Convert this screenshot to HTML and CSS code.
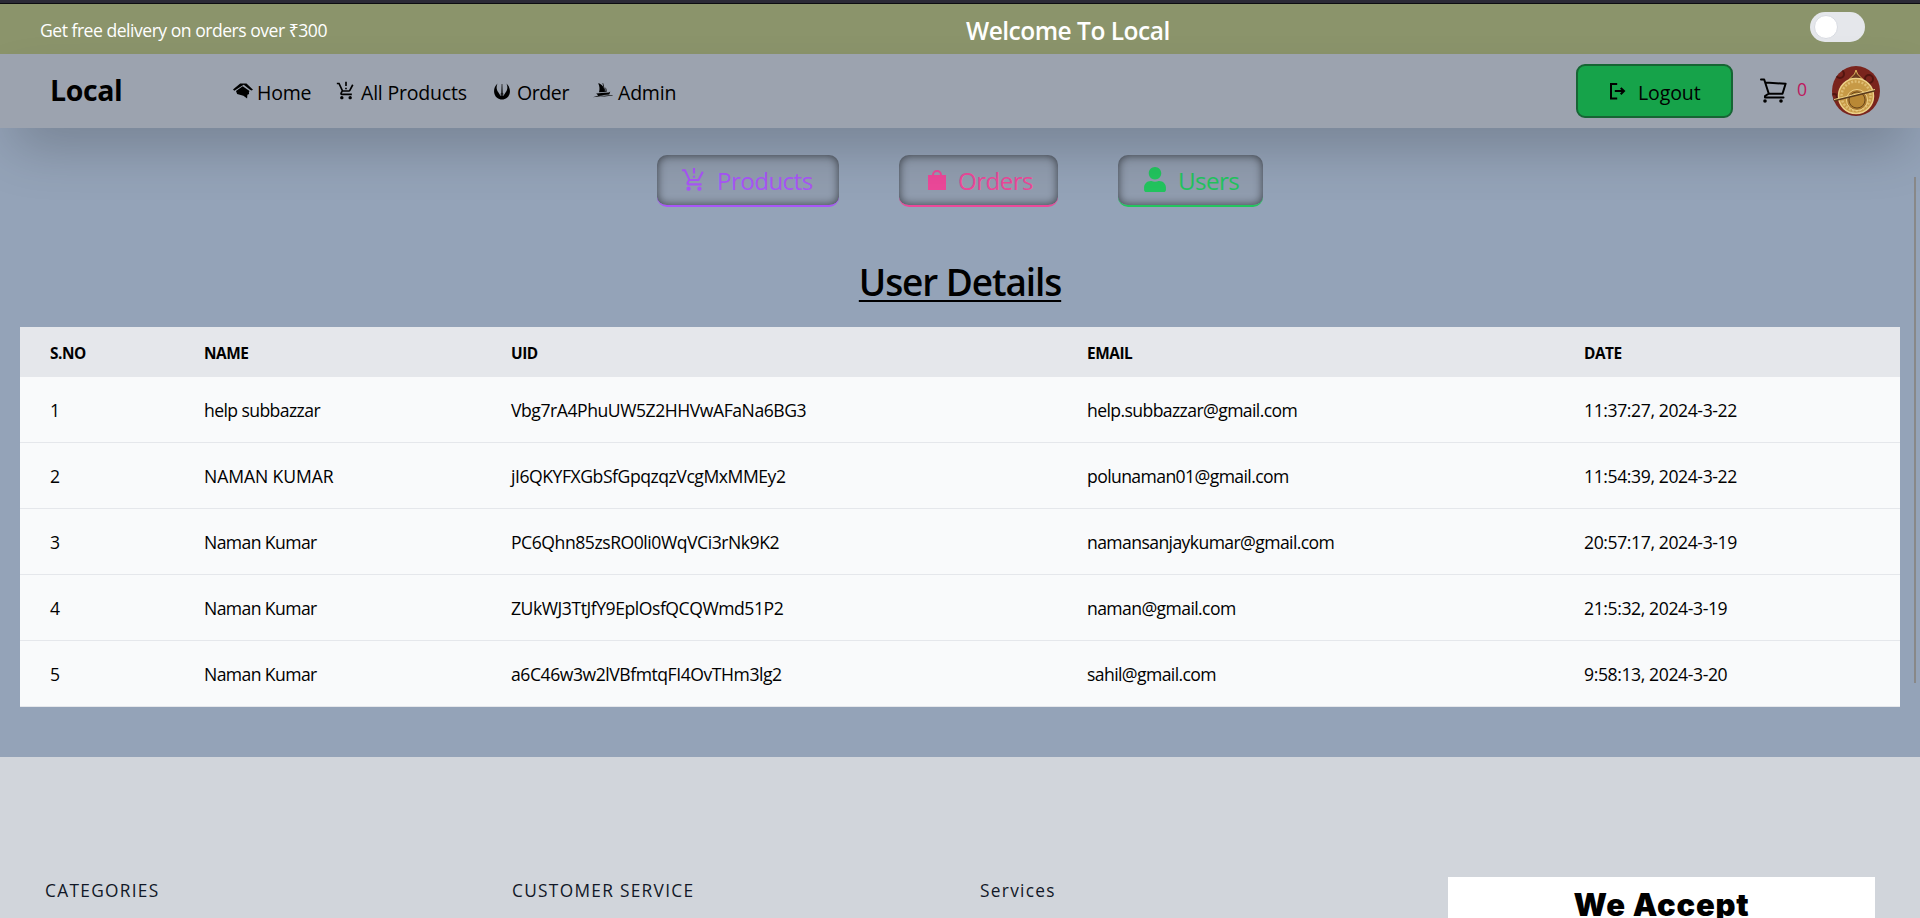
FILE: index.html
```html
<!DOCTYPE html>
<html lang="en">
<head>
<meta charset="utf-8">
<title>Local - Admin</title>
<link rel="stylesheet" href="styles.css">
</head>
<body>
<svg width="0" height="0" class="sprite">
  <symbol id="limits" viewBox="0 0 24 24"><path d="M13 10h-2V8h2v2zm0-4h-2V1h2v5zM7 18c-1.1 0-1.99.9-1.99 2S5.900 22 7 22s2-.9 2-2-.9-2-2-2zm10 0c-1.1 0-1.99.9-1.99 2s.89 2 1.99 2 2-.9 2-2-.9-2-2-2zm-8.900-5h7.450c.75 0 1.410-.41 1.750-1.030L21 4.960 19.250 4l-3.700 7H8.530L4.270 2H1v2h2l3.600 7.590-1.350 2.440C4.520 15.370 5.480 17 7 17h12v-2H7l1.100-2z"/></symbol>
</svg>
<div class="strip"></div>
<div class="promo">
  <p class="delivery">Get free delivery on orders over ₹300</p>
  <h2 class="welcome">Welcome To Local</h2>
  <span class="toggle"><span class="knob"></span></span>
</div>
<nav class="nav">
  <a class="brand">Local</a>
  <div class="links">
    <a class="link home"><svg width="20" height="16" viewBox="0 0 20 16"><path d="M0 6.600 7.200.4h6.300L20 6.800l-1.500.8-1.800-1.100-6-4.700L1.300 7.700z"/><path d="M3 7.900 9.700 3.200l6.800 4.900-.6 1.200.2 1.800-1.700.7-.3 3.700-3.700-2.800-6.300-1.600z"/></svg><span>Home</span></a>
    <a class="link all"><svg width="20" height="20"><use href="#limits"/></svg><span>All Products</span></a>
    <a class="link order"><svg width="16" height="17" viewBox="0 0 16 17"><path d="M3.500.5C-.8 4.300-1.200 11.200 3 14.700c2.800 2.400 7.200 2.400 10 0 4.200-3.500 3.800-10.400-.5-14.200 1.500 3.600 1 6.800-.8 8.800-.8 1-1.600 2.900-2.700 3.600l-.6-1.200L10 11l-1.300-.5L8.300 1h-.6l-.4 9.500L6 11l1.600.7-.6 1.200c-1.100-.7-1.900-2.600-2.700-3.600C2.500 7.300 2 4.100 3.500.5z"/></svg><span>Order</span></a>
    <a class="link admin"><svg width="20" height="16" viewBox="0 0 20 16"><path d="M5.200.2c3.500.6 6.200 4 6.700 8.900L6 9.300c.9-2.900.7-6.200-.8-9.100z"/><path d="m9.500.2.6-.1 2.400 8.800-.8.4zM12.500 4.300c.9 1 1.300 2.900 1 4.700h-.9zM3.200 10.400l5.300-.5 7.500-.4 1.300-1-1 3-11 .9zM0 14.300l6-2 5 .5 8.500-.7.200.5-8.200 1-4-.4z"/></svg><span>Admin</span></a>
  </div>
  <button class="logout"><svg width="17" height="17" viewBox="0 0 17 17"><path d="M8.200 1H2v14.600h6.200M5.800 8h9.400M11.700 4.900 15 8l-3.300 3.200"/></svg><span>Logout</span></button>
  <div class="cart"><svg width="27" height="26" viewBox="0 0 27 26"><path d="M1 1.500h3.200l4.600 14.200L5 18v1.500h18.500M8.800 15.700h13.700l3.100-10L5.600 4.600"/><circle cx="5" cy="23" r="1.800"/><circle cx="21" cy="23" r="1.800"/></svg><span>0</span></div>
  <svg class="avatar" width="48" height="50" viewBox="0 0 48 50">
    <clipPath id="oval"><ellipse cx="24" cy="25" rx="24" ry="25"/></clipPath>
    <g clip-path="url(#oval)"><rect width="48" height="50" fill="#7a241d"/>
    <g fill="none" stroke="#521510" stroke-width="2"><circle cx="8" cy="8" r="4"/><circle cx="37" cy="13" r="4"/><circle cx="2" cy="31" r="3"/></g>
    <path d="M24 4l1.500 4 5 5h-13l5-5z" fill="#6b3a20" stroke="#e0b65e"/>
    <circle cx="24" cy="30" r="17.500" fill="#c79a46" stroke="#ecd087" stroke-width="1.500"/>
    <circle cx="24" cy="30" r="14.500" fill="none" stroke="#dfbd73" stroke-width="2.500" stroke-dasharray="2 1.500"/>
    <circle cx="25" cy="34" r="10.500" fill="#aa7930" stroke="#efd38b"/>
    <circle cx="25" cy="34" r="8" fill="#b98835" stroke="#6b481d"/>
    <path d="M2 34.500 43 24.500" stroke="#59391b" stroke-width="2"/><path d="M2 33.500 43 23.500" stroke="#ecd087"/></g>
  </svg>
</nav>
<main class="main">
  <div class="tabs">
    <button class="tab products"><svg width="26" height="26"><use href="#limits"/></svg><span>Products</span></button>
    <button class="tab orders"><svg width="18" height="20" viewBox="0 0 18 20"><path d="M0 5h18v15H0z"/><path class="handle" d="M5 7V5a4 4 0 0 1 8 0V7"/></svg><span>Orders</span></button>
    <button class="tab users"><svg width="22" height="25" viewBox="0 0 448 512"><path d="M224 256c70.700 0 128-57.300 128-128S294.700 0 224 0 96 57.300 96 128s57.300 128 128 128zm89.600 32h-16.700c-22.200 10.200-46.900 16-72.900 16s-50.600-5.800-72.900-16h-16.700C60.200 288 0 348.200 0 422.400V464c0 26.500 21.500 48 48 48h352c26.500 0 48-21.500 48-48v-41.600c0-74.200-60.200-134.400-134.400-134.400z"/></svg><span>Users</span></button>
  </div>
  <h1 class="title">User Details</h1>
  <table class="table">
    <colgroup><col class="c1"><col class="c2"><col class="c3"><col class="c4"><col></colgroup>
    <thead><tr><th>S.NO</th><th>NAME</th><th>UID</th><th>EMAIL</th><th>DATE</th></tr></thead>
    <tbody>
      <tr><td>1</td><td>help subbazzar</td><td class="uid">Vbg7rA4PhuUW5Z2HHVwAFaNa6BG3</td><td>help.subbazzar@gmail.com</td><td class="date">11:37:27, 2024-3-22</td></tr>
      <tr><td>2</td><td class="caps">NAMAN KUMAR</td><td class="uid">jI6QKYFXGbSfGpqzqzVcgMxMMEy2</td><td>polunaman01@gmail.com</td><td class="date">11:54:39, 2024-3-22</td></tr>
      <tr><td>3</td><td>Naman Kumar</td><td class="uid">PC6Qhn85zsRO0li0WqVCi3rNk9K2</td><td>namansanjaykumar@gmail.com</td><td class="date">20:57:17, 2024-3-19</td></tr>
      <tr><td>4</td><td>Naman Kumar</td><td class="uid">ZUkWJ3TtJfY9EplOsfQCQWmd51P2</td><td>naman@gmail.com</td><td class="date">21:5:32, 2024-3-19</td></tr>
      <tr><td>5</td><td>Naman Kumar</td><td class="uid">a6C46w3w2lVBfmtqFI4OvTHm3lg2</td><td>sahil@gmail.com</td><td class="date">9:58:13, 2024-3-20</td></tr>
    </tbody>
  </table>
</main>
<footer class="footer">
  <h3>CATEGORIES</h3>
  <h3>CUSTOMER SERVICE</h3>
  <h3>Services</h3>
  <div class="accept">We Accept</div>
</footer>
<div class="scrollbar"></div>
</body>
</html>
```
FILE: styles.css
```css
* { box-sizing: border-box; }
html, body { height: 918px; overflow: hidden; }
body {
  margin: 0;
  display: flex;
  flex-direction: column;
  background: #94a3b8;
  color: #000;
  font-family: "Open Sans", "Noto Sans", sans-serif;
  font-size: 17.6px;
}
p, h1, h2, h3 { margin: 0; font-weight: 400; }
button { font: inherit; padding: 0; background: none; }
svg { display: block; flex: none; }
.sprite { position: absolute; }
span, a, p, h1, h2, h3 { white-space: nowrap; }

.strip { height: 4px; flex: none; background: #2b2a36; border-bottom: 1px solid #0c0c10; }
.promo {
  height: 50px;
  flex: none;
  display: grid;
  grid-template-columns: 926px 844px 55px;
  padding-left: 40px;
  background: #8b946b;
  color: #fff;
}
.delivery { line-height: 52px; letter-spacing: -0.5px; }
.welcome { line-height: 53px; font-size: 24.500px; font-weight: 600; letter-spacing: -0.5px; }
.toggle { width: 55px; height: 30px; margin-top: 8px; padding: 3px 4px; border-radius: 15px; background: #e5e7eb; }
.knob { display: block; width: 24px; height: 24px; border-radius: 50%; background: #fff; border: 1px solid #d8dbe2; }

.nav {
  height: 74px;
  flex: none;
  display: flex;
  padding-left: 50px;
  background: #9ca3af;
  box-shadow: 0 27px 55px -13px rgba(0, 0, 0, .25);
  z-index: 1;
}
.brand { width: 183px; font-size: 28.500px; font-weight: 700; line-height: 73px; letter-spacing: -0.4px; }
.links { display: flex; width: 1343px; font-size: 19.500px; line-height: 78px; letter-spacing: -0.2px; }
.link { display: flex; gap: 5px; }
.link svg { margin-top: 29px; }
.home { width: 103px; gap: 4px; }
.all { width: 158px; }
.all svg { margin-top: 27px; }
.order { width: 99px; gap: 7px; letter-spacing: -0.4px; }
.logout {
  width: 157px;
  height: 54px;
  margin-top: 10px;
  display: flex;
  padding-left: 31px;
  gap: 12px;
  border: 2px solid #166534;
  border-radius: 9px;
  background: #16a34a;
  font-size: 19.500px;
  line-height: 54px;
  letter-spacing: -0.1px;
  color: #000;
}
.logout svg { margin-top: 17px; fill: none; stroke: #000; stroke-width: 2; }
.cart { display: flex; gap: 10px; margin: 24px 0 0 27px; width: 72px; line-height: 22px; color: #be185d; }
.cart svg { fill: none; stroke: #000; stroke-width: 2; stroke-linejoin: round; stroke-linecap: round; }
.cart circle { fill: #000; stroke: none; }
.avatar { margin-top: 12px; }

.main { height: 629px; flex: none; padding: 27px 20px 0; }
.tabs { display: flex; gap: 60px; padding-left: 637px; }
.tab {
  height: 52px;
  display: flex;
  border: 0 solid;
  border-bottom-width: 2px;
  border-radius: 10px;
  background: rgba(135, 139, 148, .25);
  box-shadow: inset 0 0 10px rgba(0, 0, 0, .6);
  font-size: 24.200px;
  line-height: 51px;
  letter-spacing: -0.6px;
}
.tab svg { fill: currentColor; }
.products { width: 182px; padding-left: 24px; gap: 10px; color: #a855f7; }
.products svg { margin-top: 12px; }
.orders { width: 159px; padding-left: 29px; gap: 12px; color: #ec4899; }
.orders svg { margin-top: 15px; }
.handle { fill: none; stroke: #ec4899; stroke-width: 2; }
.users { width: 145px; padding-left: 26px; gap: 12px; color: #22c55e; }
.users svg { margin-top: 12px; }
.title {
  height: 120px;
  text-align: center;
  font-size: 37px;
  font-weight: 600;
  line-height: 149px;
  letter-spacing: -1.100px;
  text-decoration: underline;
  text-decoration-thickness: 2px;
  text-underline-offset: 4px;
}
.table { width: 1880px; table-layout: fixed; border-collapse: separate; border-spacing: 0; background: #f9fafb; }
.c1 { width: 154px; }
.c2 { width: 307px; }
.c3 { width: 576px; }
.c4 { width: 497px; }
th, td { padding: 0 0 0 30px; text-align: left; white-space: nowrap; }
th { height: 50px; padding-top: 2px; background: #e5e7eb; font-size: 15.400px; letter-spacing: -0.45px; }
td { height: 66px; padding-top: 1px; border-bottom: 1px solid #e5e7eb; letter-spacing: -0.6px; }
.uid { letter-spacing: -0.46px; }
.caps { letter-spacing: -0.1px; }
.date { letter-spacing: -0.4px; }

.footer {
  flex: 1;
  display: grid;
  grid-template-columns: 467px 468px 468px 427px;
  align-items: start;
  padding: 120px 45px 0;
  background: #d1d5db;
}
.footer h3 { font-size: 17.300px; line-height: 27px; letter-spacing: 1.3px; color: #111827; }
.accept {
  height: 41px;
  background: #fff;
  text-align: center;
  font-family: Inter, sans-serif;
  font-size: 31px;
  font-weight: 900;
  line-height: 55px;
  letter-spacing: 0.8px;
}
.scrollbar { position: absolute; left: 1914px; top: 177px; width: 2px; height: 506px; background: #888; z-index: 2; }
```
